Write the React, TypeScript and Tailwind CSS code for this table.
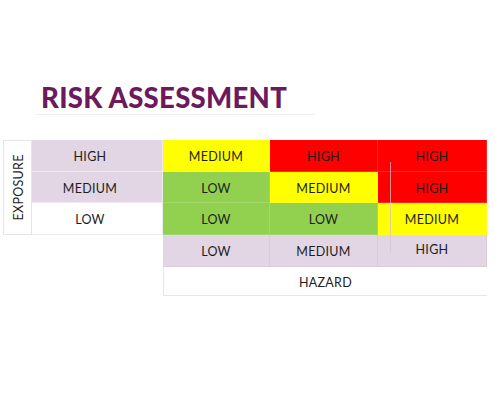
import React from 'react';

type Cell = { label: string; bg: string };

const YELLOW = 'bg-[#ffff00]';
const RED = 'bg-[#ff0000]';
const GREEN = 'bg-[#92d050]';
const LAV = 'bg-[#e3d6e4]';

const ROWS: { label: string; labelBg: string; cells: Cell[] }[] = [
  {
    label: 'HIGH',
    labelBg: LAV,
    cells: [
      { label: 'MEDIUM', bg: YELLOW },
      { label: 'HIGH', bg: RED },
      { label: 'HIGH', bg: RED },
    ],
  },
  {
    label: 'MEDIUM',
    labelBg: LAV,
    cells: [
      { label: 'LOW', bg: GREEN },
      { label: 'MEDIUM', bg: YELLOW },
      { label: 'HIGH', bg: RED },
    ],
  },
  {
    label: 'LOW',
    labelBg: 'bg-white',
    cells: [
      { label: 'LOW', bg: GREEN },
      { label: 'LOW', bg: GREEN },
      { label: 'MEDIUM', bg: YELLOW },
    ],
  },
];

const HAZARD_LEVELS = ['LOW', 'MEDIUM', 'HIGH'];

const cellText = "font-['Lato',sans-serif] text-[12.5px] text-[#1e1e1e] tracking-[0.3px] pt-[4px]";

const App: React.FC = () => {
  return (
    <div className="w-[500px] h-[401px] bg-white overflow-hidden relative">
      {/* Title */}
      <div className="ml-[35px] mt-[83px] w-[280px] border-b border-[#eeeeee] pl-[6px] pb-[1px]">
        <h1 className="font-['Lato',sans-serif] font-black text-[27.5px] leading-[30px] text-[#6c1a5d] tracking-[0.3px]">
          RISK ASSESSMENT
        </h1>
      </div>

      {/* Matrix */}
      <div className="ml-[3px] mt-[25px] grid grid-cols-[29px_131px_107px_108px_109px] grid-rows-[32px_31px_32px_32px_29px] relative">
        <div className="row-span-3 border border-[#e6e6e6] flex items-center justify-center">
          <span className={`${cellText} -rotate-90 whitespace-nowrap`}>EXPOSURE</span>
        </div>

        {ROWS.map((row) => (
          <React.Fragment key={row.label}>
            <div
              className={`${row.labelBg} border-b border-r border-[#f1e9f1] flex items-center justify-center pr-[14px] ${cellText}`}
            >
              {row.label}
            </div>
            {row.cells.map((c, i) => (
              <div
                key={i}
                className={`${c.bg} border-b border-r border-white/15 flex items-center justify-center ${cellText}`}
              >
                {c.label}
              </div>
            ))}
          </React.Fragment>
        ))}

        {/* hazard levels */}
        <div className="col-start-3 col-span-3 row-start-4 grid grid-cols-[107px_108px_109px]">
          {HAZARD_LEVELS.map((h, i) => (
            <div
              key={h}
              className={`${LAV} border-r border-b border-[#d9cbd9] flex items-center justify-center ${i === 2 ? 'pb-[4px]' : ''} ${cellText}`}
            >
              {h}
            </div>
          ))}
        </div>
        <div className="col-start-3 col-span-3 row-start-5 border-l border-b border-[#e6e6e6] flex items-center justify-center">
          <span className={cellText}>HAZARD</span>
        </div>

        {/* stray rule */}
        <div className="absolute left-[387px] top-[22px] w-px h-[90px] bg-[#cfc4cf]/70" />
      </div>
    </div>
  );
};

export default App;
